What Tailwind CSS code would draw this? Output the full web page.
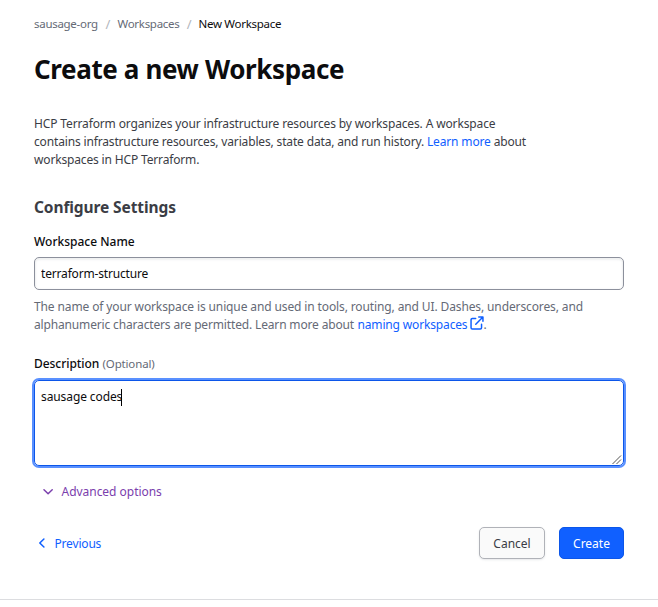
<!DOCTYPE html>
<html lang="en"><head><meta charset="utf-8"><title>New Workspace</title>
<script src="https://cdn.jsdelivr.net/npm/@tailwindcss/browser@4"></script></head>
<body class="bg-white font-['Noto_Sans','Open_Sans',sans-serif] text-[12px] leading-[18px] text-[#3b3d45]">
<main class="h-[600px] w-[658px] border-b border-[#dcdde0] pl-[34px] pr-[34px] pt-[15px] whitespace-nowrap">
  <nav class="flex h-[18px] text-[11.5px] tracking-[-0.29px] text-[#656a76]">
    <a class="w-[64px]">sausage-org</a>
    <span class="w-[19.5px] text-center text-[13px] text-[#b2b6bd]">/</span>
    <a class="w-[62px]">Workspaces</a>
    <span class="w-[19px] text-center text-[13px] text-[#b2b6bd]">/</span>
    <a class="text-[#0c0c0e]">New Workspace</a>
  </nav>
  <h1 class="mt-[18px] h-[36px] text-[26px] leading-[36px] font-bold tracking-[-0.37px] text-[#0c0c0e]">Create a new Workspace</h1>
  <p class="mt-[28px] tracking-[-0.155px]">
    <span class="tracking-[-0.135px]">HCP Terraform organizes your infrastructure resources by workspaces. A workspace</span><br>
    contains infrastructure resources, variables, state data, and run history. <a class="text-[#1060ff]">Learn more</a> about<br>
    workspaces in HCP Terraform.
  </p>
  <h2 class="mt-[25px] h-[26px] text-[15.5px] leading-[26px] font-bold tracking-[-0.1px]">Configure Settings</h2>
  <label for="name" class="mt-[13px] block font-medium text-[#0c0c0e]">Workspace Name</label>
  <input id="name" value="terraform-structure" class="mt-[6px] block h-[33px] w-[590px] rounded-[5px] border border-[#8c909c] px-[6px] tracking-[-0.17px] text-[#0c0c0e] shadow-[inset_0_1px_2px_1px_rgba(101,106,118,0.1)]">
  <p class="mt-[8px] text-[#656a76]">
    <span class="tracking-[-0.12px]">The name of your workspace is unique and used in tools, routing, and UI. Dashes, underscores, and</span><br>
    <span class="flex tracking-[-0.155px]"><span class="w-[323.5px]">alphanumeric characters are permitted. Learn more about</span><a class="flex text-[#1060ff]"><span class="w-[112px]">naming workspaces</span><svg class="h-[14px] w-[14px]" viewBox="0 0 16 16" fill="none" stroke="#1060ff" stroke-width="1.7" stroke-linecap="round" stroke-linejoin="round"><path d="M10 1.2h4.8V6M14.5 1.5 6.6 9.4M6.5 2.8H2.6A1.4 1.4 0 0 0 1.2 4.2v9.2a1.4 1.4 0 0 0 1.4 1.4h9.2a1.4 1.4 0 0 0 1.4-1.4V9.5"/></svg></a><span>.</span></span>
  </p>
  <label for="description" class="mt-[21px] flex"><span class="w-[68.5px] font-medium tracking-[-0.05px] text-[#0c0c0e]">Description</span><span class="text-[11.5px] tracking-[-0.15px] text-[#656a76]">(Optional)</span></label>
  <div id="description" class="mt-[7px] flex h-[86px] w-[590px] items-start justify-between rounded-[5px] border border-[#0c56e9] pl-[6px] text-[#0c0c0e] ring-2 ring-[#5990ff]">
    <div class="mt-[7px] flex items-center tracking-[-0.1px]"><span>sausage codes</span><span class="-ml-px h-[17px] w-px bg-black"></span></div>
    <svg class="mr-px self-end" width="10" height="10" viewBox="0 0 10 10" stroke="#555" stroke-width="1" fill="none"><path d="M0.5 9 9 0.5M4.5 9 9 4.5"/></svg>
  </div>
  <div class="mt-[17px] ml-[9px] flex h-[18px] items-center text-[#7b40ad]">
    <svg width="10" height="10" viewBox="0 0 10 10" fill="none" stroke="currentColor" stroke-width="1.5" stroke-linecap="round" stroke-linejoin="round"><path d="m1 2.7 4.1 4 4.1-4"/></svg>
    <span class="ml-[8.5px] tracking-[-0.03px]">Advanced options</span>
  </div>
  <footer class="mt-[26px] flex h-[32px] items-center">
    <a class="flex items-center text-[#1060ff]">
      <svg class="ml-[4px]" width="8" height="10" viewBox="0 0 8 10" fill="none" stroke="currentColor" stroke-width="1.5" stroke-linecap="round" stroke-linejoin="round"><path d="M5.9 1 1.8 5l4.1 4"/></svg>
      <span class="ml-[8.5px] pt-px tracking-[-0.18px]">Previous</span>
    </a>
    <button class="ml-auto h-[32px] w-[66px] rounded-[5px] border border-[#b0b2b8] bg-[#fafafa] pt-px shadow-[0_1px_2px_rgba(101,106,118,0.15)]">Cancel</button>
    <button class="ml-[14px] h-[32px] w-[65px] rounded-[5px] border border-[#0c56e9] bg-[#1060ff] pt-px text-white">Create</button>
  </footer>
</main>
</body></html>
